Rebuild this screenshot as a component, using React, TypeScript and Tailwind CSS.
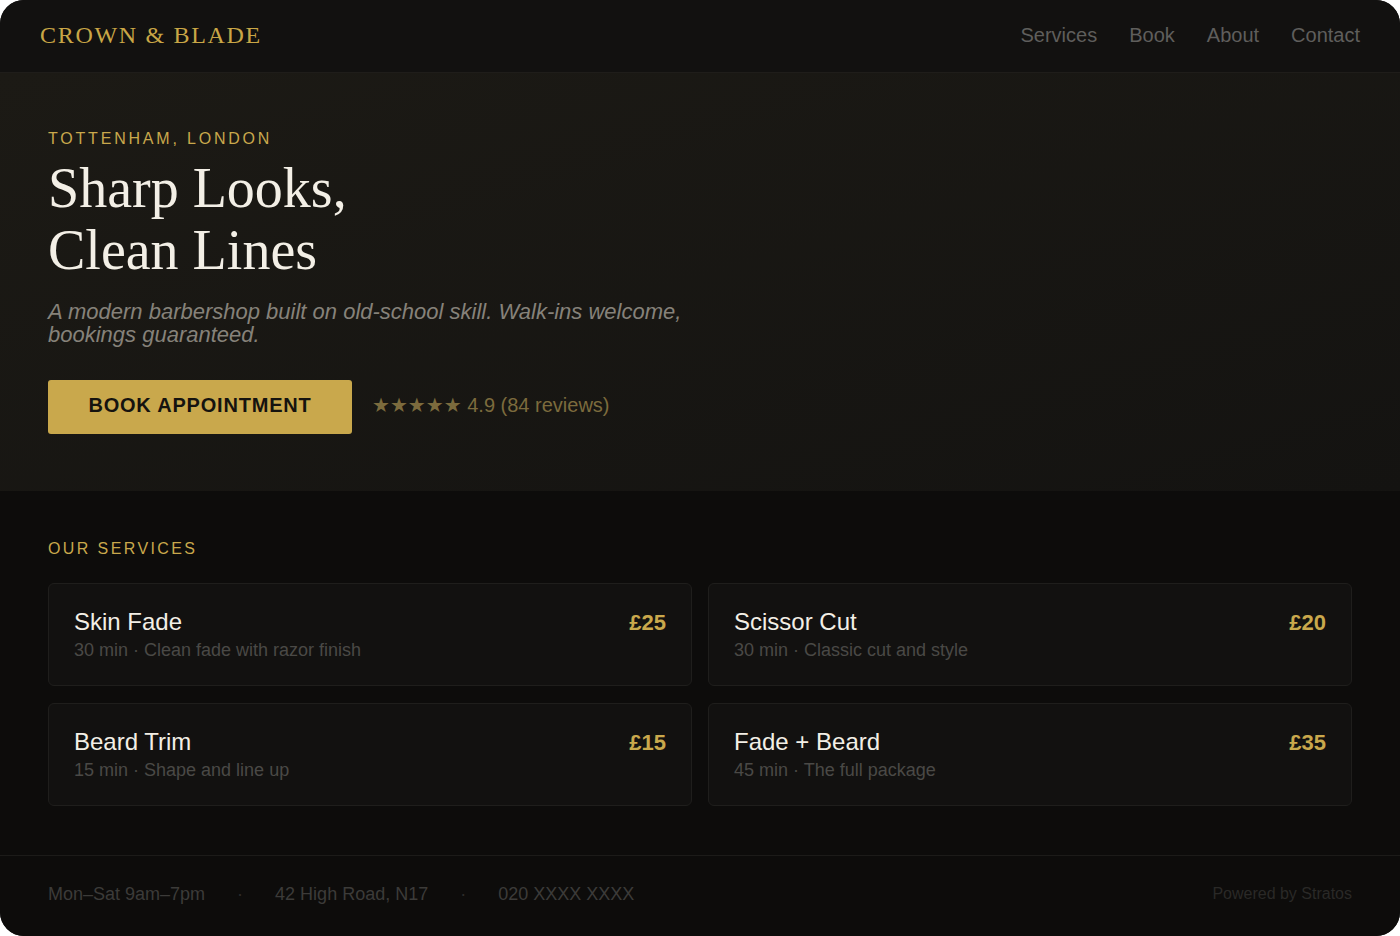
import React from "react";

const services = [
  { name: "Skin Fade", desc: "30 min · Clean fade with razor finish", price: "£25" },
  { name: "Scissor Cut", desc: "30 min · Classic cut and style", price: "£20" },
  { name: "Beard Trim", desc: "15 min · Shape and line up", price: "£15" },
  { name: "Fade + Beard", desc: "45 min · The full package", price: "£35" },
];

const sans = "font-['Liberation_Sans',Arial,sans-serif]";
const serif = "font-['Liberation_Serif','Times_New_Roman',serif]";

export default function App() {
  return (
    <div className="bg-white w-[1400px] h-[936px]">
      <div className={`h-[936px] w-[1400px] rounded-[24px] overflow-hidden bg-[#0d0c0b] flex flex-col ${sans}`}>
        {/* Header */}
        <header className="h-[73px] shrink-0 bg-[#121110] border-b border-[#1f1d1a] flex items-center justify-between px-10 pb-[2px]">
          <div className={`${serif} text-[24px] leading-none tracking-[0.07em] text-[#c9a646]`}>
            CROWN &amp; BLADE
          </div>
          <nav className="flex items-center gap-8 text-[20px] text-[#5f5e5c]">
            <span>Services</span>
            <span>Book</span>
            <span>About</span>
            <span>Contact</span>
          </nav>
        </header>

        {/* Hero */}
        <section className="h-[418px] shrink-0 bg-linear-to-br from-[#1c1a15] to-[#141311] px-12 pt-[56px]">
          <div className="text-[16px] leading-[20px] tracking-[2.8px] text-[#c9a84c]">TOTTENHAM, LONDON</div>
          <h1 className={`${serif} mt-[9px] text-[56px] leading-[1.1] font-normal text-[#f3efe6]`}>
            Sharp Looks,
            <br />
            Clean Lines
          </h1>
          <p className="mt-[19px] max-w-[660px] text-[22px] leading-[23px] italic text-[#86827a]">
            A modern barbershop built on old-school skill. Walk-ins welcome, bookings guaranteed.
          </p>
          <div className="mt-[34px] flex items-center gap-5">
            <button className="h-[54px] w-[304px] rounded-[3px] bg-[#c9a84c] text-[20px] leading-[24px] pb-[5px] font-bold tracking-[0.04em] text-[#15130f] flex items-center justify-center">
              BOOK APPOINTMENT
            </button>
            <div className="text-[20px] leading-[24px] pb-[5px] text-[#7c6b3d]">
              <span className="font-['DejaVu_Sans',sans-serif] text-[20px]">★★★★★</span> 4.9 (84 reviews)
            </div>
          </div>
        </section>

        {/* Services */}
        <section className="flex-1 bg-[#0d0c0b] px-12 pt-12">
          <div className="text-[16px] leading-[20px] tracking-[0.15em] text-[#c9a84c]">OUR SERVICES</div>
          <div className="mt-6 grid grid-cols-2 gap-x-4 gap-y-[17px]">
            {services.map((s) => (
              <div
                key={s.name}
                className="h-[103px] rounded-[6px] border border-[#1f1e1c] bg-[#121110] pl-[25px] pr-[25px] pt-[23px] flex items-start justify-between"
              >
                <div>
                  <div className="text-[24px] leading-[29px] text-[#f3efe6]">{s.name}</div>
                  <div className="mt-[3px] text-[18px] leading-[22px] text-[#4a4946]">{s.desc}</div>
                </div>
                <div className="text-[22px] leading-[29px] pt-[1px] font-bold text-[#c9a84c]">{s.price}</div>
              </div>
            ))}
          </div>
        </section>

        {/* Footer */}
        <footer className="h-[81px] shrink-0 border-t border-[#1c1b19] bg-[#0d0c0b] px-12 pb-1 flex items-center justify-between">
          <div className="flex items-center gap-8 text-[18px] text-[#3c3b39]">
            <span>Mon–Sat 9am–7pm</span>
            <span className="text-[#2e2d2b]">·</span>
            <span>42 High Road, N17</span>
            <span className="text-[#2e2d2b]">·</span>
            <span>020 XXXX XXXX</span>
          </div>
          <div className="text-[16px] text-[#2a2927]">Powered by Stratos</div>
        </footer>
      </div>
    </div>
  );
}
